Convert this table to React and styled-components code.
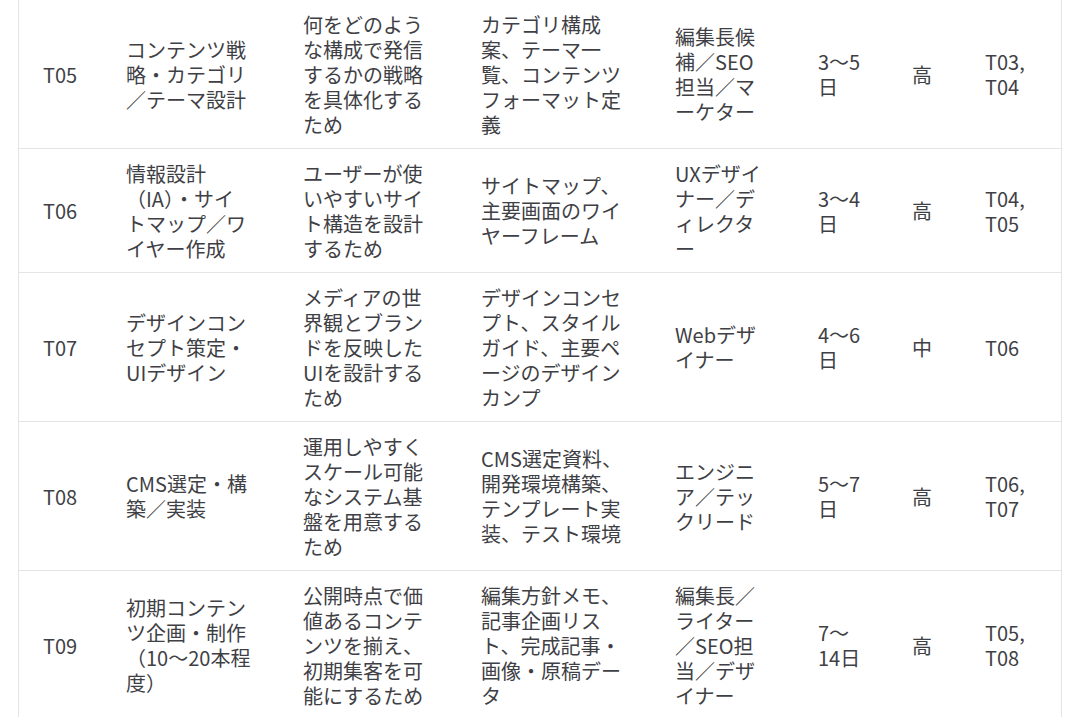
import React from "react";
import styled, { createGlobalStyle } from "styled-components";

const GlobalStyle = createGlobalStyle`
  html, body { margin: 0; padding: 0; background: #ffffff; }
  body { font-family: "Noto Sans CJK JP", "Noto Sans", sans-serif; overflow: hidden; }
`;

const Page = styled.div`
  padding: 0 18px;
`;

const Table = styled.table`
  width: 1044px;
  table-layout: fixed;
  border-collapse: separate;
  border-spacing: 0;
  border-left: 1px solid #e4e4e7;
  border-right: 1px solid #e4e4e7;
  color: #3f3f46;
  font-size: 20px;
  line-height: 25px;
`;

const Cell = styled.td`
  padding: 11.5px ${(p) => p.$padRight || 24}px 11.5px 24px;
  vertical-align: middle;
  text-align: left;
  border-bottom: 1px solid #e4e4e7;
  word-break: normal;
  line-break: strict;
`;

const columns = [
  { width: 83 },
  { width: 177, padRight: 28 },
  { width: 178 },
  { width: 194 },
  { width: 143 },
  { width: 94 },
  { width: 73 },
  { width: 100 },
];

const rows = [
  ["T05", "コンテンツ戦略・カテゴリ／テーマ設計", "何をどのような構成で発信するかの戦略を具体化するため", "カテゴリ構成案、テーマ一覧、コンテンツフォーマット定義", "編集長候補／SEO担当／マーケター", "3〜5日", "高", "T03, T04"],
  ["T06", "情報設計（IA）・サイトマップ／ワイヤー作成", "ユーザーが使いやすいサイト構造を設計するため", "サイトマップ、主要画面のワイヤーフレーム", "UXデザイナー／ディレクター", "3〜4日", "高", "T04, T05"],
  ["T07", "デザインコンセプト策定・UIデザイン", "メディアの世界観とブランドを反映したUIを設計するため", "デザインコンセプト、スタイルガイド、主要ページのデザインカンプ", "Webデザイナー", "4〜6日", "中", "T06"],
  ["T08", "CMS選定・構築／実装", "運用しやすくスケール可能なシステム基盤を用意するため", "CMS選定資料、開発環境構築、テンプレート実装、テスト環境", "エンジニア／テックリード", "5〜7日", "高", "T06, T07"],
  ["T09", "初期コンテンツ企画・制作（10〜20本程度）", "公開時点で価値あるコンテンツを揃え、初期集客を可能にするため", "編集方針メモ、記事企画リスト、完成記事・画像・原稿データ", "編集長／ライター／SEO担当／デザイナー", "7〜14日", "高", "T05, T08"],
];

export default function App() {
  return (
    <>
      <GlobalStyle />
      <Page>
        <Table>
          <colgroup>
            {columns.map((c, i) => (
              <col key={i} style={{ width: c.width }} />
            ))}
          </colgroup>
          <tbody>
            {rows.map((r) => (
              <tr key={r[0]}>
                {r.map((c, i) => (
                  <Cell key={i} $padRight={columns[i].padRight}>
                    {c}
                  </Cell>
                ))}
              </tr>
            ))}
          </tbody>
        </Table>
      </Page>
    </>
  );
}
